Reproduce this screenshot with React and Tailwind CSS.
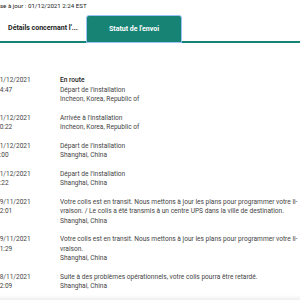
import React from 'react';

const rows = [
  { date: '01/12/2021', time: '14:47', status: 'En route', lines: ["Départ de l'installation", 'Incheon, Korea, Republic of'] },
  { date: '01/12/2021', time: '10:22', lines: ["Arrivée à l'installation", 'Incheon, Korea, Republic of'] },
  { date: '01/12/2021', time: '9:00', lines: ["Départ de l'installation", 'Shanghai, China'] },
  { date: '01/12/2021', time: '8:22', lines: ["Départ de l'installation", 'Shanghai, China'] },
  {
    date: '29/11/2021',
    time: '12:01',
    lines: [
      'Votre colis est en transit. Nous mettons à jour les plans pour programmer votre li-',
      'vraison. / Le colis a été transmis à un centre UPS dans la ville de destination.',
      'Shanghai, China',
    ],
  },
  {
    date: '29/11/2021',
    time: '11:29',
    lines: [
      'Votre colis est en transit. Nous mettons à jour les plans pour programmer votre li-',
      'vraison.',
      'Shanghai, China',
    ],
  },
  { date: '28/11/2021', time: '12:09', lines: ['Suite à des problèmes opérationnels, votre colis pourra être retardé.', 'Shanghai, China'] },
];

export default function App() {
  return (
    <div className="w-[300px] h-[300px] overflow-hidden bg-white text-[#333] font-['Roboto',sans-serif] relative">
      <div className="ml-[-7px] pt-[1px] text-[6.2px] leading-[10px] text-[#222] whitespace-nowrap">
        Mise à jour : 01/12/2021 2:24 EST
      </div>

      <div className="flex items-end mt-[4px] border-b-2 border-[#168375]">
        <div className="w-[86px] h-[26px] flex items-center justify-center text-[7px] font-bold text-[#222]">
          Détails concernant l'...
        </div>
        <div className="w-[96px] h-[28px] mb-[-2px] rounded-t-[3px] border border-[#9cc2f7] bg-[#168375] flex items-center justify-center text-[7px] font-bold text-white">
          Statut de l'envoi
        </div>
      </div>

      <div className="ml-[-4px] pt-[33px] flex flex-col gap-[9px]">
        {rows.map((r, i) => (
          <div key={i} className="flex leading-[9.5px] whitespace-nowrap">
            <div className="w-[64px] shrink-0 text-[6.5px] text-[#444]">
              <div>{r.date}</div>
              <div>{r.time}</div>
            </div>
            <div className="text-[6.6px] text-[#444]">
              {r.status && <div className="text-[#222] font-medium">{r.status}</div>}
              {r.lines.map((l, j) => (
                <div key={j}>{l}</div>
              ))}
            </div>
          </div>
        ))}
      </div>

      <div className="absolute left-0 right-0 bottom-0 h-[5px] bg-gradient-to-b from-white to-[#efefef]" />
    </div>
  );
}
